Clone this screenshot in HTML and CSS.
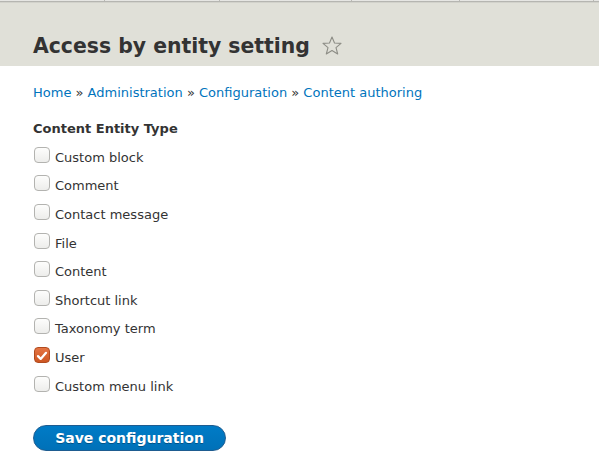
FILE: index.html
```html
<!DOCTYPE html>
<html>
<head>
<meta charset="utf-8">
<link rel="stylesheet" href="styles.css">
</head>
<body>
<div class="topbar">
  <span class="tab t1"></span><span class="tab t2"></span><span class="tab t3"></span><span class="tab t4"></span><span class="tab t5"></span>
</div>
<header class="header">
  <h1 class="title">Access by entity setting <span class="star"><svg width="20" height="20" viewBox="0 0 20 20"><path d="M10 1 L12.5 7 L19 7.4 L14 11.6 L15.7 18 L10 14.5 L4.3 18 L6 11.6 L1 7.4 L7.5 7 Z" fill="none" stroke="#8d8d86" stroke-width="1.1" stroke-linejoin="round"/></svg></span></h1>
</header>
<main class="content">
  <nav class="breadcrumb"><a href="#">Home</a> » <a href="#">Administration</a> » <a href="#">Configuration</a> » <a href="#">Content authoring</a></nav>
  <div class="label">Content Entity Type</div>
  <div class="checks">
    <label class="item"><span class="box"></span>Custom block</label>
    <label class="item"><span class="box"></span>Comment</label>
    <label class="item"><span class="box"></span>Contact message</label>
    <label class="item"><span class="box"></span>File</label>
    <label class="item"><span class="box"></span>Content</label>
    <label class="item"><span class="box"></span>Shortcut link</label>
    <label class="item"><span class="box"></span>Taxonomy term</label>
    <label class="item"><span class="box checked"><svg width="16" height="16" viewBox="0 0 16 16"><path d="M3.4 8.2 L6.5 11.3 L12.6 4.4" fill="none" stroke="#fff" stroke-width="2.6" stroke-linecap="round" stroke-linejoin="round"/></svg></span>User</label>
    <label class="item"><span class="box"></span>Custom menu link</label>
  </div>
  <button class="btn">Save configuration</button>
</main>
</body>
</html>
```
FILE: styles.css
```css
* { box-sizing: border-box; }
html, body { margin: 0; padding: 0; background: #fff; }
body {
  font-family: "DejaVu Sans", Verdana, sans-serif;
  color: #333;
  width: 599px;
  height: 471px;
  overflow: hidden;
}
.topbar {
  height: 3px;
  display: flex;
  background: linear-gradient(#e6e6e3 0, #e6e6e3 1px, #a3a3a0 1px, #c8c8c2 2px, #dcdcd4 3px);
}
.tab { height: 1px; border-right: 1px solid #b9b9b4; }
.t1 { width: 105px; }
.t2 { width: 115px; }
.t3 { width: 132px; }
.t4 { width: 108px; }
.t5 { width: 134px; }
.header {
  background: #e0e0d8;
  height: 63px;
  padding: 29px 0 0 33px;
}
.title {
  margin: 0;
  font-size: 20.4px;
  font-weight: bold;
  line-height: 28px;
  color: #333;
  display: flex;
  align-items: center;
}
.star { display: inline-flex; margin-left: 12px; margin-top: 0; }
.content { padding: 18px 0 0 33px; }
.breadcrumb { font-size: 13px; line-height: 18px; color: #333; }
.breadcrumb a { color: #0074bd; text-decoration: none; }
.label {
  margin-top: 18px;
  font-size: 13px;
  font-weight: bold;
  line-height: 18px;
}
.checks { margin-top: 5px; display: flex; flex-direction: column; }
.item {
  height: 28.6px;
  display: flex;
  align-items: center;
  font-size: 13px;
  color: #333;
  padding-left: 1px;
}
.box {
  width: 16px;
  height: 16px;
  border: 1px solid #b3b3b0;
  border-radius: 4px;
  background: linear-gradient(#fdfdfc, #ededeb);
  margin-right: 5px;
  margin-top: -5px;
  flex: none;
  display: flex;
}
.box.checked {
  border-color: #b14b1f;
  background: linear-gradient(#e57544, #cd5622);
}
.btn {
  margin-top: 25px;
  width: 193px;
  height: 26px;
  border: 1px solid #1e5c90;
  border-radius: 20px;
  background: linear-gradient(#007bc6, #0071b8);
  color: #fff;
  font-family: "DejaVu Sans", Verdana, sans-serif;
  font-weight: bold;
  font-size: 14px;
  padding: 0;
  text-shadow: 0 1px 0 rgba(0,0,0,0.3);
}
```
